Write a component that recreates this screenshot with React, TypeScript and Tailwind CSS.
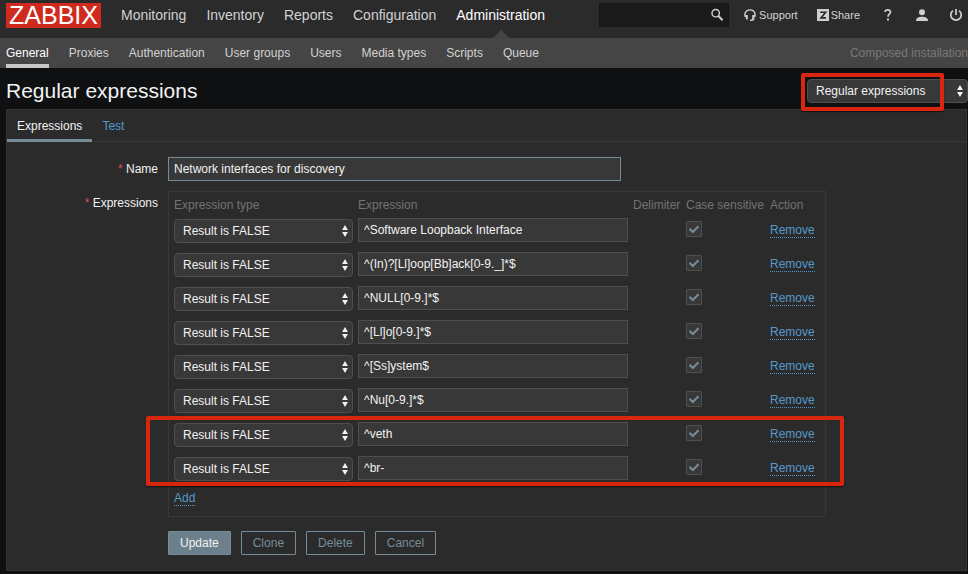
import React, { useState } from 'react';

const mainMenu = ['Monitoring', 'Inventory', 'Reports', 'Configuration', 'Administration'];

const subMenu = ['General', 'Proxies', 'Authentication', 'User groups', 'Users', 'Media types', 'Scripts', 'Queue'];

const initialExpressions = [
  { id: 1, value: '^Software Loopback Interface' },
  { id: 2, value: '^(In)?[Ll]oop[Bb]ack[0-9._]*$' },
  { id: 3, value: '^NULL[0-9.]*$' },
  { id: 4, value: '^[Ll]o[0-9.]*$' },
  { id: 5, value: '^[Ss]ystem$' },
  { id: 6, value: '^Nu[0-9.]*$' },
  { id: 7, value: '^veth' },
  { id: 8, value: '^br-' },
];

const expressionTypes = ['Result is FALSE', 'Result is TRUE', 'Character string included', 'Any character string included'];

type SelectProps = {
  label: string;
  options: string[];
};

const Select = ({ label, options }: SelectProps) => (
  <div className="relative">
    <select
      aria-label={label}
      className="block h-6 w-full appearance-none rounded-[4px] border border-[#4f4f4f] bg-[#383838] pr-5 pb-px pl-2 text-xs text-[#f2f2f2] outline-none"
    >
      {options.map((option) => (
        <option key={option}>{option}</option>
      ))}
    </select>
    <svg className="pointer-events-none absolute top-[6px] right-[5px] h-3 w-[6px]" viewBox="0 0 6 12" fill="#f2f2f2">
      <path d="M3 0 5.9 5H0.1zM3 12 0.1 7h5.8z" />
    </svg>
  </div>
);

const Header = () => (
  <header className="flex h-[38px] items-start bg-[#2b2b2b] pt-[3px] pl-[6px] text-[#d2d2d2]">
    <a
      href="#"
      className="flex h-[25px] w-[95px] shrink-0 items-center justify-center bg-[#d02a1e] text-[25px] leading-[25px] text-white"
    >
      ZABBIX
    </a>
    <nav className="ml-5 flex gap-5 text-sm leading-[25px]">
      {mainMenu.map((item) => (
        <a key={item} href="#" className={item === 'Administration' ? 'relative h-[35px] text-white' : 'h-[35px]'}>
          {item}
          {item === 'Administration' && (
            <svg className="absolute bottom-0 left-1/2 -ml-2 h-2 w-4" viewBox="0 0 16 8" fill="#454545">
              <path d="M8 0 16 8H0z" />
            </svg>
          )}
        </a>
      ))}
    </nav>
    <div className="ml-auto flex h-6 items-center pr-[6px] text-[11px]">
      <div className="relative mr-[15px]">
        <input
          type="text"
          aria-label="Search"
          className="block h-6 w-[130px] border border-[#161616] bg-[#1a1a1a] pr-6 pl-1 outline-none"
        />
        <button aria-label="Search" className="absolute top-[5px] right-[5px]">
          <svg className="h-[14px] w-[14px]" viewBox="0 0 14 14" fill="none" stroke="#cfcfcf">
            <circle cx="5.7" cy="5.2" r="3.7" strokeWidth="1.4" />
            <path d="M8.4 8 12.6 12.2" strokeWidth="2" />
          </svg>
        </button>
      </div>
      <a href="#" className="flex items-center gap-[3px]">
        <svg className="h-3 w-3" viewBox="0 0 12 12">
          <path d="M1.3 8C0 4.2 1.8 0.9 6 0.9S12 4.2 10.7 8" fill="none" stroke="#cfcfcf" strokeWidth="1.4" />
          <path d="M1 6h2.800v4.6H2.2zM11 6H8.2v4.6h1.6z" fill="#cfcfcf" />
          <path d="M10.3 9.5C9.8 11.2 8.5 11.4 6 11.4" fill="none" stroke="#cfcfcf" strokeWidth="1.2" />
        </svg>
        Support
      </a>
      <a href="#" className="ml-[19px] flex items-center gap-[2px]">
        <svg className="h-3 w-3" viewBox="0 0 12 12">
          <rect width="12" height="12" fill="#cfcfcf" />
          <path d="M3.2 3.2h5.4L4 8.9h5" fill="none" stroke="#2b2b2b" strokeWidth="1.6" />
        </svg>
        Share
      </a>
      <a href="#" aria-label="Help" className="ml-6">
        <svg className="h-3 w-2" viewBox="0 0 8 12" fill="none" stroke="#cfcfcf" strokeWidth="1.7">
          <path d="M1 3C1.2 1.6 2.2 0.9 3.8 0.9 5.5 0.9 6.5 1.8 6.5 3.1 6.5 5 4 5 4 7.8" />
          <path d="M4 9.5v2" strokeWidth="2" />
        </svg>
      </a>
      <a href="#" aria-label="User profile" className="ml-6">
        <svg className="h-3 w-3" viewBox="0 0 12 12" fill="#cfcfcf">
          <circle cx="6" cy="3.2" r="3" />
          <path d="M0 12C0 8.8 2.5 7.7 6 7.7s6 1.1 6 4.3z" />
        </svg>
      </a>
      <a href="#" aria-label="Sign out" className="ml-[22px]">
        <svg className="h-3 w-3" viewBox="0 0 12 12" fill="none" stroke="#cfcfcf" strokeWidth="1.7">
          <path d="M3 1.6a5.2 5.2 0 1 0 6 0" />
          <path d="M6 0v6" />
        </svg>
      </a>
    </div>
  </header>
);

const SubMenu = () => (
  <nav className="flex h-[30px] gap-5 bg-[#454545] pl-[6px] leading-[30px] text-[#d2d2d2]">
    {subMenu.map((item) => (
      <a
        key={item}
        href="#"
        className={item === 'General' ? 'border-b-4 border-[#c8c8c8] text-white' : ''}
      >
        {item}
      </a>
    ))}
    <span className="ml-auto text-[#787878]">Composed installation</span>
  </nav>
);

const ExpressionsTable = () => {
  const [rows, setRows] = useState(initialExpressions);

  const addRow = () => setRows([...rows, { id: Date.now(), value: '' }]);
  const removeRow = (id: number) => setRows(rows.filter((row) => row.id !== id));

  return (
    <div className="relative w-[658px] border border-[#383838] p-[5px]">
      <table className="w-full table-fixed border-collapse text-left">
        <colgroup>
          <col className="w-[184px]" />
          <col className="w-[275px]" />
          <col className="w-[53px]" />
          <col className="w-[84px]" />
          <col />
        </colgroup>
        <thead>
          <tr className="h-4 leading-4 whitespace-nowrap text-[#737373]">
            <th className="p-0 font-normal">Expression type</th>
            <th className="p-0 font-normal">Expression</th>
            <th className="p-0 font-normal">Delimiter</th>
            <th className="p-0 font-normal">Case sensitive</th>
            <th className="p-0 font-normal">Action</th>
          </tr>
        </thead>
        <tbody>
          {rows.map((row) => (
            <tr key={row.id}>
              <td className="pt-[6px] pr-[5px] pb-1">
                <Select label="Expression type" options={expressionTypes} />
              </td>
              <td className="py-[5px] pr-[5px]">
                <input
                  type="text"
                  aria-label="Expression"
                  defaultValue={row.value}
                  className="block h-6 w-full border border-[#4f4f4f] bg-[#383838] px-[5px] outline-none"
                />
              </td>
              <td />
              <td className="pb-[3px]">
                <div className="relative h-4 w-4">
                  <input
                    type="checkbox"
                    aria-label="Case sensitive"
                    defaultChecked
                    className="peer block h-4 w-4 appearance-none rounded-[1px] border border-[#4f4f4f] bg-[#383838]"
                  />
                  <svg className="pointer-events-none invisible absolute top-0 left-0 h-4 w-4 peer-checked:visible" viewBox="0 0 16 16" fill="none" stroke="#768d99" strokeWidth="2">
                    <path d="M3.5 7.8 6.8 11 12.5 5.2" />
                  </svg>
                </div>
              </td>
              <td>
                <button onClick={() => removeRow(row.id)} className="block border-b border-dotted border-[#5599cb] leading-[14px] text-[#5599cb]">
                  Remove
                </button>
              </td>
            </tr>
          ))}
          <tr>
            <td colSpan={5} className="h-[26px]">
              <button onClick={addRow} className="block border-b border-dotted border-[#5599cb] leading-[14px] text-[#5599cb]">
                Add
              </button>
            </td>
          </tr>
        </tbody>
      </table>
      {/* highlight round the last two expressions */}
      <div className="pointer-events-none absolute top-[224px] -right-[19px] -left-[23px] h-[70px] rounded-[2px] border-4 border-[#d9260f] shadow-[0_1px_1px_#111]" />
    </div>
  );
};

const App = () => {
  return (
    <div className="min-h-screen bg-[#0e1012] font-['Liberation_Sans',Arial,sans-serif] text-xs text-[#f2f2f2]">
      <Header />
      <SubMenu />
      <main className="pl-[6px]">
        <div className="flex h-[41px] items-start justify-between">
          <h1 className="pt-[11px] text-[21px] leading-6">Regular expressions</h1>
          <div className="relative mt-[11px] w-[161px]">
            <Select label="Administration section" options={['Regular expressions', 'GUI', 'Housekeeping', 'Images', 'Icon mapping', 'Macros']} />
            <div className="pointer-events-none absolute -top-[6px] right-6 -left-[6px] h-[38px] rounded-[2px] border-4 border-[#d9260f] shadow-[0_1px_1px_#111]" />
          </div>
        </div>

        <div className="mr-px border border-[#333333] bg-[#2b2b2b] pb-[15px]">
          <div className="flex h-8 border-b border-[#383838] leading-8">
            <a href="#" className="-mb-px border-b-[3px] border-[#768d99] px-[10px]">Expressions</a>
            <a href="#" className="px-[10px] text-[#5599cb]">Test</a>
          </div>

          <form className="flex flex-col gap-[10px] pt-[15px]" onSubmit={(e) => e.preventDefault()}>
            <div className="flex">
              <label htmlFor="name" className="w-[151px] shrink-0 text-right leading-6">
                <span className="text-[#d64e4e]">*</span> Name
              </label>
              <input
                id="name"
                type="text"
                defaultValue="Network interfaces for discovery"
                className="ml-[10px] h-6 w-[453px] border border-[#768d99] bg-[#383838] px-[5px] outline-none"
              />
            </div>
            <div className="flex">
              <span className="w-[151px] shrink-0 text-right leading-6">
                <span className="text-[#d64e4e]">*</span> Expressions
              </span>
              <div className="ml-[10px]">
                <ExpressionsTable />
              </div>
            </div>
            <div className="mt-1 ml-[161px] flex gap-[10px] text-[#768d99]">
              <button type="submit" className="h-6 rounded-[1px] border border-[#768d99] bg-[#6c808b] px-[11px] text-[#f2f2f2]">Update</button>
              <button type="button" className="h-6 rounded-[1px] border border-[#768d99] px-[11px]">Clone</button>
              <button type="button" className="h-6 rounded-[1px] border border-[#768d99] px-[11px]">Delete</button>
              <button type="button" className="h-6 rounded-[1px] border border-[#768d99] px-[11px]">Cancel</button>
            </div>
          </form>
        </div>
      </main>
    </div>
  );
};

export default App;
